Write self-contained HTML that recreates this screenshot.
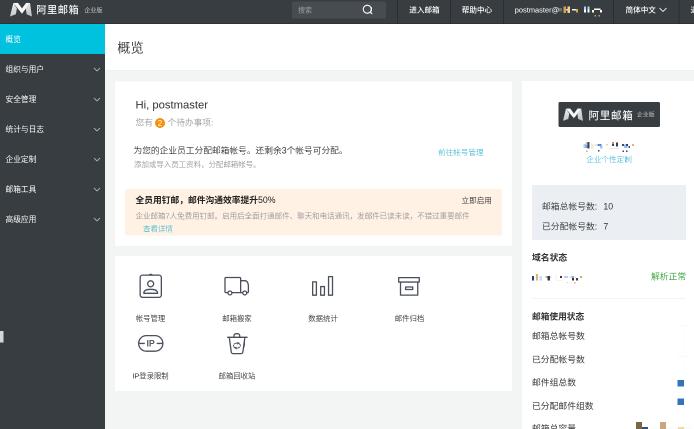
<!DOCTYPE html>
<html lang="zh-CN">
<head>
<meta charset="utf-8">
<title>阿里邮箱企业版 - 概览</title>
<style>
html,body{margin:0;padding:0;background:#f3f5f5;overflow:hidden;}
body{width:694px;height:429px;position:relative;font-family:"Liberation Sans","Noto Sans CJK SC",sans-serif;}
#root{position:absolute;left:0;top:0;width:1388px;height:858px;transform:scale(0.5);transform-origin:0 0;will-change:transform;filter:blur(0.55px);overflow:visible;color:#333;}
#root *{box-sizing:border-box;}
#root{font-weight:350;}
#side{font-weight:400;}
#hdr{font-weight:500;}
.abs{position:absolute;white-space:nowrap;}
.t{position:absolute;white-space:nowrap;line-height:1;transform:translateY(-50%);}
/* header */
#hdr{position:absolute;left:0;top:0;width:1388px;height:48px;}
#hdrbg{position:absolute;left:-20px;top:-20px;width:1428px;height:68px;background:#383d41;border-bottom:2px solid #2e3337;}
#hdr .sep{position:absolute;top:0;width:2px;height:48px;background:#2a2e32;}
#hdr .t{color:#fff;font-size:15.2px;}
#search{position:absolute;left:584px;top:2.5px;width:188px;height:34px;background:#474c51;border-radius:4px;}
/* sidebar */
#side{position:absolute;left:0;top:48px;width:210px;height:810px;}
#sidebg{position:absolute;left:-20px;top:48px;width:230px;height:830px;background:#373d41;}
#side .act{position:absolute;left:-20px;top:0;width:230px;height:60px;background:#00c1de;}
#side .t{color:#fff;font-size:15.4px;left:11px;}
#side svg.chev{position:absolute;left:186px;width:16px;height:10px;}
/* title bar */
#tbar{position:absolute;left:210px;top:48px;width:1198px;height:92px;background:#fff;box-shadow:0 1px 3px rgba(0,0,0,0.04);}
.card{position:absolute;background:#fff;}
.gray{color:#999;}
.link{color:#1fb0d0;font-weight:300;}
</style>
</head>
<body>
<div id="root">

  <!-- title bar -->
  <div id="tbar">
    <div class="t" style="left:24.5px;top:48px;font-size:26.4px;color:#333;">概览</div>
  </div>

  <!-- card 1 -->
  <div class="card" style="left:230px;top:162.5px;width:794px;height:329.5px;"><div class="abs" style="left:1px;top:-0.5px;width:793px;height:330px;">
    <div class="t" style="left:40px;top:48px;font-size:22.5px;color:#333;">Hi, postmaster</div>
    <div class="t gray" style="left:40px;top:84px;font-size:17.4px;">您有</div>
    <div class="abs" style="left:79px;top:74px;width:20px;height:20px;border-radius:50%;background:#f5900c;"></div>
    <div class="t" style="left:84.5px;top:84.5px;font-size:16px;color:#fff;">2</div>
    <div class="t gray" style="left:104px;top:84px;font-size:17.4px;">个待办事项:</div>

    <div class="t" style="left:36px;top:140px;font-size:17.45px;color:#333;">为您的企业员工分配邮箱帐号。还剩余3个帐号可分配。</div>
    <div class="t gray" style="left:37px;top:167px;font-size:14.9px;">添加或导入员工资料，分配邮箱帐号。</div>
    <div class="t link" style="left:645px;top:143px;font-size:15.2px;">前往帐号管理</div>

    <div class="abs" style="left:19px;top:216px;width:754px;height:93px;background:#fff1e4;border-radius:4px;">
      <div class="t" style="left:21px;top:23px;font-size:17.5px;font-weight:bold;color:#222;">全员用钉邮，邮件沟通效率提升<span style="font-weight:400;">50%</span></div>
      <div class="t" style="left:673px;top:22.5px;font-size:15.2px;color:#333;">立即启用</div>
      <div class="t gray" style="left:21px;top:53px;font-size:15px;">企业邮箱7人免费用钉邮。启用后全面打通邮件、聊天和电话通讯，发邮件已读未读，不错过重要邮件</div>
      <div class="t link" style="left:36px;top:78.5px;font-size:15px;">查看详情</div>
    </div>
  </div></div>

  <!-- card 2 -->
  <div class="card" style="left:230px;top:512px;width:794px;height:270px;"><div class="abs" style="left:1px;top:0;width:793px;height:270px;">
    <!-- account -->
    <svg class="abs" style="left:47.7px;top:35.1px;" width="46" height="50" viewBox="0 0 46 50" fill="none" stroke="#4a4f5c" stroke-width="2.6" stroke-linecap="round" stroke-linejoin="round">
      <rect x="1.3" y="3.3" width="42.4" height="44.4" rx="5"/>
      <path d="M19.3 3.3 q3.2 -3.4 6.4 0"/>
      <circle cx="22.3" cy="20.6" r="6"/>
      <path d="M8.6 39.6 c0 -6.4 6 -8 13.8 -8 s13.8 1.6 13.8 8 z"/>
    </svg>
    <div class="t" style="left:70px;top:125px;font-size:14.7px;color:#333;transform:translate(-50%,-50%);">帐号管理</div>
    <!-- truck -->
    <svg class="abs" style="left:216.7px;top:41.3px;" width="54" height="40" viewBox="0 0 54 40" fill="none" stroke="#4a4f5c" stroke-width="2.6" stroke-linecap="round" stroke-linejoin="round">
      <path d="M8 32.2 H4 a2 2 0 0 1 -2 -2 V4 a2 2 0 0 1 2 -2 H31.3 a2 2 0 0 1 2 2 V32.2 H16"/>
      <path d="M33.3 8.4 H41.8 c4.2 0 7 5 7 10 V30.2 a2 2 0 0 1 -2 2 H45.6"/>
      <path d="M33.3 32.2 H37.4"/>
      <circle cx="11.9" cy="32.9" r="3.9"/>
      <circle cx="41.5" cy="32.9" r="3.9"/>
    </svg>
    <div class="t" style="left:243px;top:125px;font-size:14.7px;color:#333;transform:translate(-50%,-50%);">邮箱搬家</div>
    <!-- chart -->
    <svg class="abs" style="left:393.3px;top:39.7px;" width="44" height="42" viewBox="0 0 44 42" fill="none" stroke="#4a4f5c" stroke-width="2.6" stroke-linejoin="round">
      <rect x="1.3" y="11.8" width="7.5" height="26.6"/>
      <rect x="17.4" y="21.1" width="7.5" height="17.3"/>
      <rect x="33.1" y="1.3" width="7.9" height="37.1"/>
    </svg>
    <div class="t" style="left:415px;top:125px;font-size:14.7px;color:#333;transform:translate(-50%,-50%);">数据统计</div>
    <!-- archive -->
    <svg class="abs" style="left:564.9px;top:42px;" width="46" height="40" viewBox="0 0 46 40" fill="none" stroke="#4a4f5c" stroke-width="2.6" stroke-linejoin="round">
      <rect x="1.3" y="1.3" width="41.2" height="8.8"/>
      <path d="M5 10.1 V36.2 H39.5 V10.1"/>
      <rect x="15.2" y="20" width="14.2" height="5"/>
    </svg>
    <div class="t" style="left:588px;top:125px;font-size:14.7px;color:#333;transform:translate(-50%,-50%);">邮件归档</div>
    <!-- IP -->
    <svg class="abs" style="left:44.7px;top:158px;" width="52" height="35" viewBox="0 0 52 35" fill="none" stroke="#4a4f5c" stroke-width="2.6" stroke-linecap="round" stroke-linejoin="round">
      <rect x="1.3" y="1.3" width="48.4" height="31.1" rx="15.5"/>
      <path d="M1.3 16.9 H12.5 M38.5 16.9 H49.7"/>
      <text x="25.3" y="23.3" text-anchor="middle" font-family="Liberation Sans, sans-serif" font-size="17.7" font-weight="bold" fill="#5a5d64" stroke="none">IP</text>
    </svg>
    <div class="t" style="left:70px;top:240px;font-size:14.7px;color:#333;transform:translate(-50%,-50%);">IP登录限制</div>
    <!-- trash -->
    <svg class="abs" style="left:223px;top:154.2px;" width="42" height="45" viewBox="0 0 42 45" fill="none" stroke="#4a4f5c" stroke-width="2.6" stroke-linecap="round" stroke-linejoin="round">
      <path d="M1.3 8.6 H40.2"/>
      <path d="M13.9 8.6 V5.4 a4 4 0 0 1 4 -4 H21.4 a4 4 0 0 1 4 4 V8.6"/>
      <path d="M4.6 8.6 L8.4 37.5 a4 4 0 0 0 4 3.8 H27.8 a4 4 0 0 0 4 -3.8 L35.8 8.6"/>
      <ellipse cx="19.9" cy="25.2" rx="6.9" ry="5" stroke-width="1.8" stroke-dasharray="16.5 2.4" stroke-dashoffset="-3"/>
      <path d="M21 18.6 l3 1.6 l-2.6 2 M18.8 31.8 l-3 -1.6 l2.6 -2" stroke-width="1.5"/>
    </svg>
    <div class="t" style="left:243px;top:240px;font-size:14.7px;color:#333;transform:translate(-50%,-50%);">邮箱回收站</div>
  </div></div>

  <!-- right panel -->
  <div class="card" style="left:1044px;top:162px;width:360px;height:720px;">
    <div class="abs" style="left:72.5px;top:42.2px;width:203.4px;height:50.2px;background:#373d41;border-radius:3px;">
      <svg class="abs" style="left:9.9px;top:11.6px;" width="40" height="27.2" viewBox="0 0 44 29"><defs><linearGradient id="mg2" x1="0" y1="0" x2="0.3" y2="1"><stop offset="0" stop-color="#f2f2f2"/><stop offset="1" stop-color="#c2c4c6"/></linearGradient></defs>
        <path d="M6.6 1 L13.8 12 L11.8 23.5 L0 28 Z M40.1 1 L43.9 28 L33.2 23.5 L31.6 12 Z" fill="url(#mg2)"/>
        <path d="M6.6 1 L15.9 0.7 L24 11.8 L32.2 0.7 L40.1 1 L24 22.5 Z" fill="#f6f6f6"/>
      </svg>
      <div class="t" style="left:60.5px;top:25.5px;font-size:21px;font-weight:500;color:#f4f4f4;letter-spacing:1.5px;">阿里邮箱</div>
      <div class="t" style="left:157.3px;top:26.3px;font-size:11.9px;font-weight:400;color:#c8c8c8;">企业版</div>
    </div>
    <!-- mosaic domain -->
    <i class="abs" style="left:123.1px;top:126.1px;width:4.0px;height:8.1px;background:#b4d0ec;"></i>
    <i class="abs" style="left:127.2px;top:123.1px;width:4.0px;height:3.4px;background:#e8b878;"></i>
    <i class="abs" style="left:127.2px;top:126.5px;width:4.0px;height:7.7px;background:#7d9bd0;"></i>
    <i class="abs" style="left:131.2px;top:122.1px;width:4.0px;height:13.1px;background:#2f3f6e;"></i>
    <i class="abs" style="left:138.3px;top:125.1px;width:5.0px;height:11.1px;background:#f3ecd2;"></i>
    <i class="abs" style="left:145.3px;top:126.1px;width:4.0px;height:4.0px;background:#dfe6f2;"></i>
    <i class="abs" style="left:151.4px;top:126.1px;width:8.1px;height:4.0px;background:#5a86d4;"></i>
    <i class="abs" style="left:156.4px;top:130.1px;width:5.0px;height:5.0px;background:#a9c6ee;"></i>
    <i class="abs" style="left:152.4px;top:138.2px;width:3.0px;height:3.0px;background:#34477a;"></i>
    <i class="abs" style="left:128.2px;top:139.2px;width:3.0px;height:3.0px;background:#e6a85c;"></i>
    <i class="abs" style="left:167.5px;top:126.1px;width:4.0px;height:3.0px;background:#f2d2b0;"></i>
    <i class="abs" style="left:179.6px;top:122.1px;width:4.0px;height:2.4px;background:#d08a4a;"></i>
    <i class="abs" style="left:179.6px;top:124.5px;width:4.0px;height:5.6px;background:#4a3c40;"></i>
    <i class="abs" style="left:187.7px;top:122.1px;width:4.0px;height:2.0px;background:#d08a4a;"></i>
    <i class="abs" style="left:187.7px;top:124.1px;width:4.0px;height:7.1px;background:#2e3a5e;"></i>
    <i class="abs" style="left:174.6px;top:134.2px;width:18.2px;height:1.6px;background:#e4e6ea;"></i>
    <i class="abs" style="left:199.8px;top:126.1px;width:4.0px;height:4.0px;background:#34477a;"></i>
    <i class="abs" style="left:203.8px;top:127.1px;width:7.1px;height:7.1px;background:#9dbcec;"></i>
    <i class="abs" style="left:207.9px;top:126.1px;width:4.0px;height:4.0px;background:#2f3f6e;"></i>
    <i class="abs" style="left:212.9px;top:130.1px;width:3.0px;height:4.0px;background:#3c4f82;"></i>
    <i class="abs" style="left:200.8px;top:139.2px;width:3.0px;height:3.0px;background:#34477a;"></i>
    <i class="abs" style="left:207.9px;top:139.2px;width:3.0px;height:3.0px;background:#34477a;"></i>
    <i class="abs" style="left:220.0px;top:126.1px;width:4.0px;height:4.0px;background:#e0b080;"></i>
    <div class="t link" style="left:174px;top:156.5px;font-size:15.2px;transform:translate(-50%,-50%);">企业个性定制</div>

    <div class="abs" style="left:20px;top:208px;width:308px;height:110px;background:#ebeef3;">
      <div class="t" style="left:20px;top:43.5px;font-size:17.6px;color:#333;">邮箱总帐号数:&nbsp;&nbsp;<span style="margin-left:2.5px;">10</span></div>
      <div class="t" style="left:20px;top:83.5px;font-size:17.6px;color:#333;">已分配帐号数:&nbsp;&nbsp;<span style="margin-left:2.5px;">7</span></div>
    </div>

    <div class="t" style="left:20px;top:354px;font-size:17.6px;font-weight:bold;color:#333;">域名状态</div>
    <i class="abs" style="left:19.7px;top:389.8px;width:4.0px;height:9.5px;background:#2f3f7a;"></i>
    <i class="abs" style="left:27.8px;top:386.2px;width:4.0px;height:13.1px;background:#e4b070;"></i>
    <i class="abs" style="left:35.2px;top:390.2px;width:4.6px;height:9.1px;background:#bfe0f6;"></i>
    <i class="abs" style="left:47.3px;top:390.2px;width:4.0px;height:4.0px;background:#dcae70;"></i>
    <i class="abs" style="left:51.4px;top:390.2px;width:4.6px;height:9.1px;background:#2f3a5a;"></i>
    <i class="abs" style="left:56.4px;top:390.2px;width:3.0px;height:4.0px;background:#e2e4ea;"></i>
    <i class="abs" style="left:66.5px;top:386.2px;width:2.0px;height:13.1px;background:#f1f2f6;"></i>
    <i class="abs" style="left:75.6px;top:389.8px;width:4.0px;height:4.4px;background:#4a2c3c;"></i>
    <i class="abs" style="left:70.5px;top:398.3px;width:10.1px;height:1.0px;background:#e6e8ec;"></i>
    <i class="abs" style="left:83.7px;top:390.2px;width:8.1px;height:4.0px;background:#b6d4ee;"></i>
    <i class="abs" style="left:94.7px;top:390.2px;width:4.0px;height:4.0px;background:#e8eef6;"></i>
    <i class="abs" style="left:99.2px;top:390.2px;width:4.6px;height:4.0px;background:#8ab0d8;"></i>
    <i class="abs" style="left:99.8px;top:394.2px;width:4.0px;height:5.0px;background:#3a2c4e;"></i>
    <i class="abs" style="left:104.8px;top:390.2px;width:3.0px;height:4.0px;background:#f6eccc;"></i>
    <i class="abs" style="left:107.9px;top:394.2px;width:4.0px;height:5.0px;background:#3a3c70;"></i>
    <i class="abs" style="left:115.9px;top:389.8px;width:4.0px;height:4.4px;background:#e2a464;"></i>
    <i class="abs" style="left:88.7px;top:401.9px;width:3.0px;height:2.0px;background:#bcdcf2;"></i>
    <i class="abs" style="left:96.8px;top:402.3px;width:2.4px;height:2.4px;background:#f6eccc;"></i>
    <i class="abs" style="left:104.4px;top:402.3px;width:2.8px;height:3.0px;background:#e4ac66;"></i>
    <div class="t" style="left:258px;top:392px;font-size:17.6px;color:#35a13a;">解析正常</div>

    <div class="abs" style="left:20px;top:433.5px;width:308px;height:1.6px;background:#e6e8e8;"></div>

    <div class="t" style="left:20px;top:471.5px;font-size:17.4px;font-weight:bold;color:#333;">邮箱使用状态</div>
    <div class="t" style="left:20px;top:511px;font-size:17.6px;color:#3a3a3a;font-weight:400;">邮箱总帐号数</div>
    <div class="t" style="left:20px;top:558px;font-size:17.6px;color:#3a3a3a;font-weight:400;">已分配帐号数</div>
    <div class="t" style="left:20px;top:604px;font-size:17.6px;color:#3a3a3a;font-weight:400;">邮件组总数</div>
    <div class="t" style="left:20px;top:651px;font-size:17.6px;color:#3a3a3a;font-weight:400;">已分配邮件组数</div>
    <div class="t" style="left:20px;top:695.5px;font-size:17.6px;color:#3a3a3a;font-weight:400;">邮箱总容量</div>

    <i class="abs" style="left:311px;top:489px;width:1.5px;height:240px;background:#f9fafa;"></i>
    <i class="abs" style="left:323.5px;top:489px;width:1.5px;height:240px;background:#f9fafa;"></i>
    <i class="abs" style="left:311px;top:489px;width:20px;height:1.5px;background:#f9fafa;"></i>
    <i class="abs" style="left:311px;top:550px;width:20px;height:1.5px;background:#f9fafa;"></i>
    <i class="abs" style="left:260px;top:693px;width:80px;height:1.5px;background:#f3f4f5;"></i>
    <div class="abs" style="left:311px;top:598.5px;width:13px;height:12.5px;background:#3374b5;"></div>
    <div class="abs" style="left:311px;top:635px;width:13px;height:12.5px;background:#3374b5;"></div>
    <!-- bottom mosaic -->
    <i class="abs" style="left:228px;top:682px;width:12px;height:20px;background:#7b6547;"></i>
    <i class="abs" style="left:240px;top:692px;width:12px;height:10px;background:#3c4f78;"></i>
    <i class="abs" style="left:276px;top:682px;width:12px;height:20px;background:#c9a67c;"></i>
    <i class="abs" style="left:312px;top:692px;width:12px;height:10px;background:#ecd9a4;"></i>
  </div>

  <!-- sidebar -->
  <div id="sidebg"></div>
  <div id="side">
    <div class="act"></div>
    <div class="t" style="top:31px;">概览</div>
    <div class="t" style="top:91px;">组织与用户</div>
    <div class="t" style="top:151px;">安全管理</div>
    <div class="t" style="top:211px;">统计与日志</div>
    <div class="t" style="top:271px;">企业定制</div>
    <div class="t" style="top:331px;">邮箱工具</div>
    <div class="t" style="top:391px;">高级应用</div>
    <svg class="chev" style="top:86px;" viewBox="0 0 16 10"><path d="M2 2 L8 8 L14 2" fill="none" stroke="#a9afb3" stroke-width="1.8"/></svg>
    <svg class="chev" style="top:146px;" viewBox="0 0 16 10"><path d="M2 2 L8 8 L14 2" fill="none" stroke="#a9afb3" stroke-width="1.8"/></svg>
    <svg class="chev" style="top:206px;" viewBox="0 0 16 10"><path d="M2 2 L8 8 L14 2" fill="none" stroke="#a9afb3" stroke-width="1.8"/></svg>
    <svg class="chev" style="top:266px;" viewBox="0 0 16 10"><path d="M2 2 L8 8 L14 2" fill="none" stroke="#a9afb3" stroke-width="1.8"/></svg>
    <svg class="chev" style="top:326px;" viewBox="0 0 16 10"><path d="M2 2 L8 8 L14 2" fill="none" stroke="#a9afb3" stroke-width="1.8"/></svg>
    <svg class="chev" style="top:386px;" viewBox="0 0 16 10"><path d="M2 2 L8 8 L14 2" fill="none" stroke="#a9afb3" stroke-width="1.8"/></svg>
    <div class="abs" style="left:-20px;top:614px;width:27px;height:23px;background:#d4d7d9;"></div>
  </div>

  <!-- header -->
  <div id="hdrbg"></div>
  <div id="hdr">
    <svg class="abs" style="left:20.4px;top:5.2px;" width="44" height="29" viewBox="0 0 44 29"><defs><linearGradient id="mg1" x1="0" y1="0" x2="0.3" y2="1"><stop offset="0" stop-color="#f2f2f2"/><stop offset="1" stop-color="#c2c4c6"/></linearGradient></defs>
        <path d="M6.6 1 L13.8 12 L11.8 23.5 L0 28 Z M40.1 1 L43.9 28 L33.2 23.5 L31.6 12 Z" fill="url(#mg1)"/>
        <path d="M6.6 1 L15.9 0.7 L24 11.8 L32.2 0.7 L40.1 1 L24 22.5 Z" fill="#f6f6f6"/>
    </svg>
    <div class="t" style="left:72.6px;top:20px;font-size:20.5px;font-weight:500;color:#f4f4f4;letter-spacing:1px;">阿里邮箱</div>
    <div class="t" style="left:168.8px;top:20.8px;font-size:12px;font-weight:400;color:#c8c8c8;">企业版</div>

    <div id="search">
      <div class="t" style="left:12px;top:17px;font-size:14px;color:#8f959a;">搜索</div>
      <svg class="abs" style="left:139px;top:5px;" width="24" height="24" viewBox="0 0 24 24" fill="none" stroke="#f2f2f2" stroke-width="2.3"><circle cx="11.5" cy="10.5" r="8"/><path d="M17.5 16.5 L21.5 20.5"/></svg>
    </div>
    <div class="sep" style="left:794px;"></div>
    <div class="t" style="left:818.5px;top:20px;">进入邮箱</div>
    <div class="sep" style="left:900px;"></div>
    <div class="t" style="left:923.5px;top:20px;">帮助中心</div>
    <div class="sep" style="left:1006px;"></div>
    <div class="t" style="left:1029.5px;top:20px;font-size:14.9px;">postmaster@</div>
    <i class="abs" style="left:1117px;top:16px;width:7px;height:7px;background:#7fa4b8;opacity:.55;"></i>
    <i class="abs" style="left:1127px;top:13px;width:5px;height:13px;background:#d9a14a;"></i>
    <i class="abs" style="left:1135px;top:13px;width:5px;height:13px;background:#ecd58e;"></i>
    <i class="abs" style="left:1132px;top:18px;width:3px;height:3px;background:#e8d9a0;"></i>
    <i class="abs" style="left:1144px;top:18px;width:8px;height:3px;background:#f0f0f0;"></i>
    <i class="abs" style="left:1151.5px;top:18px;width:4px;height:7px;background:#d4a84a;"></i>
    <i class="abs" style="left:1167.5px;top:13px;width:4px;height:6px;background:#a9d4f0;"></i>
    <i class="abs" style="left:1167.5px;top:19px;width:4px;height:6px;background:#ffffff;"></i>
    <i class="abs" style="left:1174.5px;top:13px;width:4px;height:6px;background:#a9d4f0;"></i>
    <i class="abs" style="left:1174.5px;top:19px;width:4px;height:6px;background:#ffffff;"></i>
    <i class="abs" style="left:1183.7px;top:20px;width:4px;height:5px;background:#ffffff;"></i>
    <i class="abs" style="left:1187.7px;top:17px;width:13px;height:3px;background:#ffffff;"></i>
    <i class="abs" style="left:1200px;top:20px;width:4px;height:5px;background:#ffffff;"></i>
    <i class="abs" style="left:1188.7px;top:30px;width:3px;height:3px;background:#d9963a;"></i>
    <i class="abs" style="left:1196.8px;top:30px;width:3px;height:3px;background:#d9963a;"></i>
    <div class="sep" style="left:1226px;"></div>
    <div class="t" style="left:1251px;top:20px;">简体中文</div>
    <svg class="abs" style="left:1317px;top:14px;" width="18" height="12" viewBox="0 0 18 12"><path d="M2 2 L9 9 L16 2" fill="none" stroke="#e8e8e8" stroke-width="1.8"/></svg>
    <div class="sep" style="left:1357px;"></div>
    <div class="t" style="left:1381px;top:20px;">退出</div>
  </div>

</div>
</body>
</html>
